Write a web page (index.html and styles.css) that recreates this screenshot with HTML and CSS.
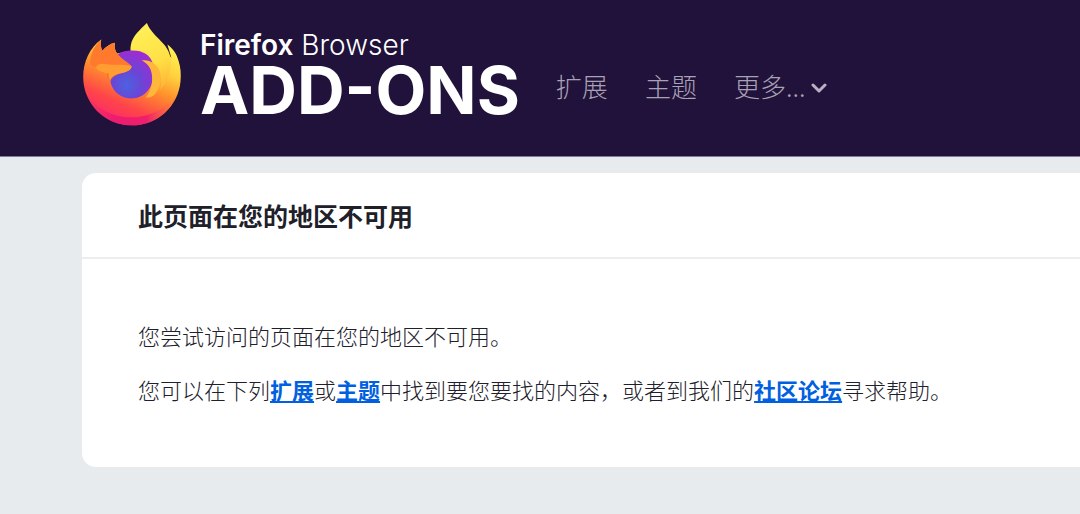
FILE: index.html
```html
<!DOCTYPE html>
<html lang="zh-CN">
<head>
<meta charset="utf-8">
<meta name="viewport" content="width=device-width, initial-scale=1">
<title>此页面在您的地区不可用</title>
<link rel="stylesheet" href="styles.css">
</head>
<body>
<header class="Header">
  <a class="Header-logo" href="#">
    <svg class="Header-icon" viewBox="38 38 297 310" aria-hidden="true">
      <defs>
        <linearGradient id="body" x1="0.85" y1="0.1" x2="0.4" y2="1">
          <stop offset="0" stop-color="#fff04f"/>
          <stop offset="0.26" stop-color="#ffd03e"/>
          <stop offset="0.5" stop-color="#ff8f2c"/>
          <stop offset="0.78" stop-color="#ff4549"/>
          <stop offset="1" stop-color="#fb2a68"/>
        </linearGradient>
        <linearGradient id="tail" x1="0.4" y1="0" x2="0.7" y2="1">
          <stop offset="0" stop-color="#fff057"/>
          <stop offset="0.6" stop-color="#ffe046"/>
          <stop offset="1" stop-color="#ffb437"/>
        </linearGradient>
        <radialGradient id="globe" cx="0.38" cy="0.72" r="0.75">
          <stop offset="0" stop-color="#4c62e0"/>
          <stop offset="0.45" stop-color="#6a45d6"/>
          <stop offset="1" stop-color="#a02bd2"/>
        </radialGradient>
        <linearGradient id="face" x1="0.3" y1="0" x2="0.5" y2="1">
          <stop offset="0" stop-color="#ff7a2b"/>
          <stop offset="0.6" stop-color="#ff7a2e"/>
          <stop offset="1" stop-color="#ff6a35"/>
        </linearGradient>
        <linearGradient id="rim" x1="0" y1="0" x2="1" y2="0">
          <stop offset="0" stop-color="#f52a62" stop-opacity="0"/>
          <stop offset="0.3" stop-color="#ec1c70"/>
          <stop offset="0.65" stop-color="#ee1f6c"/>
          <stop offset="1" stop-color="#ff8b36" stop-opacity="0"/>
        </linearGradient>
      </defs>
      <path fill="url(#body)" d="M95 90C91 102 94 113 98 124C108 112 121 103 136 100C133 111 135 122 142 132L184 124C196 100 270 90 304 145C300 132 296 119 292 105C308 117 320 133 325 153C332 174 333 195 331 215C324 290 262 346 186 346C106 346 41 282 41 202C41 157 60 114 95 90Z"/>
      <path fill="url(#rim)" d="M46 240C68 288 118 320 176 322C242 324 303 292 328 236C311 300 256 346 186 346C118 346 62 302 46 240Z"/>
      <path fill="url(#tail)" d="M231 41C210 61 187 81 183 107C181 116 182 124 184 132C210 123 242 133 247 158C271 178 281 210 269 241C295 215 307 177 300 139C291 98 246 81 231 41Z"/>
      <path fill="url(#globe)" d="M140 139C151 126 170 123 190 123C219 123 241 137 248 160C257 188 249 224 236 240C224 257 204 266 184 266C148 266 121 238 121 203L126 168Z"/>
      <path fill="#ffb73b" d="M215 153C233 149 254 158 265 176C278 199 273 231 255 253C246 262 238 264 228 262C244 244 248 222 246 197C244 176 233 161 215 153Z"/>
      <path fill="url(#face)" d="M95 90C91 102 94 113 98 124C108 112 121 103 136 100C132 113 137 127 147 137C158 150 174 158 185 169C187 180 171 187 157 190C140 194 123 203 122 217C109 207 112 198 113 190C94 190 78 180 79 173L61 166C62 135 73 108 95 90Z"/>
      <path fill="#ff9d32" d="M79 172C86 160 100 162 113 164C130 168 159 163 185 169C187 180 171 187 157 190C139 193 124 200 121 212C118 207 117 199 117 191C94 188 80 182 79 172Z"/>
    </svg>
    <span class="Header-title">
      <span class="Header-brand"><b>Firefox</b> Browser</span>
      <span class="Header-product">ADD-ONS</span>
    </span>
  </a>
  <nav class="Header-nav">
    <a href="#">扩展</a>
    <a href="#">主题</a>
    <button type="button" class="Header-more">更多...
      <svg class="Header-arrow" viewBox="0 0 16 16" aria-hidden="true"><path d="M2 7l6 6 6-6"/></svg>
    </button>
  </nav>
</header>

<main class="Page">
  <section class="Card">
    <h1 class="Card-header">此页面在您的地区不可用</h1>
    <div class="Card-contents">
      <p>您尝试访问的页面在您的地区不可用。</p>
      <p>您可以在下列<a href="#">扩展</a>或<a href="#">主题</a>中找到要您要找的内容，或者到我们的<a href="#">社区论坛</a>寻求帮助。</p>
    </div>
  </section>
</main>
</body>
</html>
```

FILE: styles.css
```css
* { box-sizing: border-box; }

body {
  margin: 0;
  background: #e7ebee;
  color: #20202a;
  font-family: "Noto Sans CJK SC", "Noto Sans", sans-serif;
  font-size: 22px;
  font-weight: 300;
  line-height: 32px;
}

.Header {
  display: flex;
  align-items: flex-start;
  padding: 22px 82px 30px;
  background: #20123a;
  border-bottom: 1px solid #8478a0;
}

.Header-logo {
  display: flex;
  gap: 18px;
  color: #fff;
  text-decoration: none;
}

.Header-icon {
  width: 100px;
  height: 104px;
}

.Header-title {
  display: flex;
  flex-direction: column;
  padding-top: 8px;
  font-family: Inter, sans-serif;
  white-space: nowrap;
}

.Header-brand {
  font-size: 28px;
  line-height: 30px;
}

.Header-brand b { font-weight: 600; }

.Header-product {
  font-size: 66px;
  font-weight: 700;
  line-height: 60px;
}

.Header-nav {
  display: flex;
  gap: 37px;
  margin-left: 36px;
  padding-top: 48px;
}

.Header-nav a,
.Header-more {
  color: #a9a1b5;
  font: inherit;
  font-size: 26px;
  line-height: 32px;
  text-decoration: none;
  white-space: nowrap;
}

.Header-more {
  display: flex;
  align-items: center;
  gap: 6px;
  padding: 0;
  border: 0;
  background: none;
}

.Header-arrow {
  width: 16px;
  height: 16px;
  fill: none;
  stroke: #b8b1c2;
  stroke-width: 3;
  stroke-linecap: round;
  stroke-linejoin: round;
}

.Page { padding: 16px 0 46px 82px; }

.Card {
  background: #fff;
  border-radius: 14px 0 0 14px;
}

.Card-header {
  margin: 0;
  padding: 26px 56px;
  border-bottom: 2px solid #ededf0;
  font-size: 25px;
  font-weight: 700;
  line-height: 32px;
}

.Card-contents { padding: 60px 56px 62px; }

.Card-contents p { margin: 0 0 22px; }

.Card-contents p:last-child { margin-bottom: 0; }

.Card-contents a {
  color: #0060df;
  font-weight: 700;
}
```
